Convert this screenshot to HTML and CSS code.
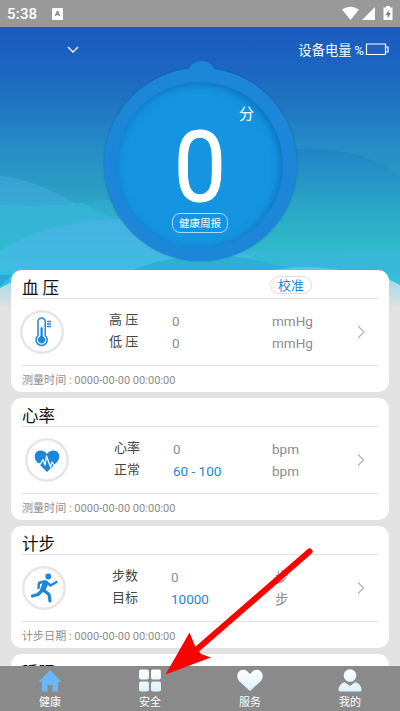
FILE: index.html
```html
<!DOCTYPE html>
<html lang="zh-CN">
<head>
<meta charset="utf-8">
<meta name="viewport" content="width=device-width, initial-scale=1">
<title>健康</title>
<link rel="stylesheet" href="styles.css">
</head>
<body>
<div class="screen">
  <header class="status">
    <span class="clock">5:38</span>
    <span class="ime">A</span>
    <svg class="signals" width="52" height="18" viewBox="0 0 52 18">
      <path fill="#fff" d="M0 4.500Q8.500-1 17 4.500L8.500 15Z M33 2v13H20Z"/>
      <path fill="#fff" d="M44 1h4v1.500h2.500v12.500H41.500v-12.500H44Z"/>
      <path fill="#777" d="M46.700 5l-3 5h2v3.500l3-5.500h-2Z"/>
    </svg>
  </header>

  <main class="content">
    <svg class="waves" width="400" height="285" viewBox="0 27 400 285" preserveAspectRatio="none">
      <defs>
        <linearGradient id="sky" x1="0" y1="27" x2="0" y2="312" gradientUnits="userSpaceOnUse">
          <stop offset="0" stop-color="#195abf"/>
          <stop offset=".16" stop-color="#1d67c1"/>
          <stop offset=".3" stop-color="#2179c2"/>
          <stop offset=".39" stop-color="#2588c6"/>
          <stop offset=".61" stop-color="#2ba3c4"/>
          <stop offset=".77" stop-color="#2eb9c9"/>
          <stop offset=".88" stop-color="#32c0da"/>
          <stop offset="1" stop-color="#32c0e0"/>
        </linearGradient>
        <linearGradient id="hill" x1="0" y1="150" x2="0" y2="245" gradientUnits="userSpaceOnUse">
          <stop offset="0" stop-color="#2084c6"/>
          <stop offset="1" stop-color="#2cb9ca" stop-opacity="0"/>
        </linearGradient>
        <linearGradient id="crest" x1="0" y1="220" x2="0" y2="275" gradientUnits="userSpaceOnUse">
          <stop offset="0" stop-color="#45b1e2"/>
          <stop offset="1" stop-color="#3fbee2"/>
        </linearGradient>
        <linearGradient id="fade" x1="0" y1="278" x2="0" y2="308" gradientUnits="userSpaceOnUse">
          <stop offset="0" stop-color="#9dd9e8"/>
          <stop offset="1" stop-color="#e2e2e2"/>
        </linearGradient>
      </defs>
      <path fill="url(#sky)" d="M0 27H400V312H0Z"/>
      <path fill="url(#hill)" d="M260 153Q350 138 400 176V250H260Z"/>
      <path fill="#35b0dc" fill-opacity=".42" d="M0 205Q60 208 130 197V240H0Z"/>
      <path fill="#45ace4" fill-opacity=".5" d="M0 176C45 180 75 207 115 221L130 240H0Z"/>
      <path fill="#32bcd4" fill-opacity=".55" d="M0 205Q45 207 82 203L115 219Q55 219 0 251Z"/>
      <path fill="url(#crest)" d="M0 251C50 219 120 211 180 228Q230 243 285 275H0Z"/>
      <path fill="#2eafd6" d="M130 271Q210 238 310 275H120Z"/>
      <path fill="#3ab5da" fill-opacity=".6" d="M235 249Q310 250 400 246V275H320Q280 258 235 253Z"/>
      <path fill="#56c8e0" d="M268 271Q308 263 345 271Z"/>
      <path fill="#34bfe2" d="M0 271H12V290H0Z"/>
      <path fill="#28abd2" d="M12 275L0 287V275Z"/>
      <path fill="url(#fade)" d="M0 288L12 282V312H0Z M388 279L400 285V312H388Z M12 290H388V312H12Z"/>
    </svg>

    <section class="hero">
      <div class="topbar">
        <svg class="chevron-down" width="12" height="8" viewBox="0 0 12 8"><path d="M1 1l5 5 5-5" fill="none" stroke="#fff" stroke-width="1.300"/></svg>
        <div class="device">设备电量&thinsp;%
          <svg width="25" height="13" viewBox="0 0 25 13"><path d="M1.500 1h19v10.500h-19Z M20.500 4h2.500v5h-2.500" fill="none" stroke="#fff" stroke-width="1.200"/></svg>
        </div>
      </div>
      <div class="gauge">
        <div class="dial">
          <span class="fen">分</span>
          <span class="score">0</span>
          <span class="report">健康周报</span>
        </div>
      </div>
    </section>

    <div class="cards">
      <article class="card card-bp">
        <h2>血 压<span class="calibrate">校准</span></h2>
        <div class="body">
          <div class="icon"><svg width="44" height="44" viewBox="0 0 44 44">
            <path fill="none" stroke="#1c86da" stroke-width="1.500" d="M18 25.500V11.500a3.600 3.600 0 0 1 7.200 0V25.500a5.600 5.600 0 1 1-7.200 0Z"/>
            <path d="M21 18a.6.6 0 0 1 1.200 0v8.500a3.300 3.300 0 1 1-1.200 0Z" fill="#1c86da" stroke="#1c86da"/>
            <path d="M27 11.500h4M27 14h4M27 16.500h4" stroke="#1c86da" stroke-width="1.300"/>
          </svg></div>
          <div class="rows">
            <span>高 压</span><b>0</b><i>mmHg</i>
            <span>低 压</span><b>0</b><i>mmHg</i>
          </div>
          <svg class="next" width="8" height="14" viewBox="0 0 8 14"><path d="M1 1l6 6-6 6"/></svg>
        </div>
        <footer>测量时间 : 0000-00-00 00:00:00</footer>
      </article>

      <article class="card card-hr">
        <h2>心率</h2>
        <div class="body">
          <div class="icon"><svg width="44" height="44" viewBox="0 0 44 44">
            <path fill="#1c86da" d="M22 34L11.500 23.500C8 19 10 12.500 15.500 12.500c3 0 5 1.500 6.500 3.500 1.500-2 3.500-3.500 6.500-3.500 5.500 0 7.500 6.500 4 11Z"/>
            <path fill="none" stroke="#fff" stroke-width="1.300" stroke-linejoin="round" d="M10 26h5.500l2.500-4.500 2 5.500 1.500-9 4 11 1.500-5 2 3h5"/>
          </svg></div>
          <div class="rows">
            <span>心率</span><b>0</b><i>bpm</i>
            <span>正常</span><b class="target">60 - 100</b><i>bpm</i>
          </div>
          <svg class="next" width="8" height="14" viewBox="0 0 8 14"><path d="M1 1.500l5.500 5.500-5.500 5.500"/></svg>
        </div>
        <footer>测量时间 : 0000-00-00 00:00:00</footer>
      </article>

      <article class="card card-step">
        <h2>计步</h2>
        <div class="body">
          <div class="icon"><svg width="44" height="44" viewBox="0 0 44 44">
            <circle cx="26.300" cy="10.500" r="2.900" fill="#1c86da"/>
            <g fill="none" stroke="#1c86da" stroke-linecap="round" stroke-linejoin="round">
              <path stroke-width="5.500" d="M23.500 17L21 23.500"/>
              <path stroke-width="2.500" d="M22 15.500l-5 1.500-.5 5M25 16.500l3.500 3 6-3.500"/>
              <path stroke-width="3.200" d="M20 24.500l-4 4-5.500 1.500M22 24.500l5 4 1 6.500"/>
            </g>
          </svg></div>
          <div class="rows">
            <span>步数</span><b>0</b><i>步</i>
            <span>目标</span><b class="target">10000</b><i>步</i>
          </div>
          <svg class="next" width="8" height="14" viewBox="0 0 8 14"><path d="M1 1.500l5.500 5.500-5.500 5.500"/></svg>
        </div>
        <footer>计步日期 : 0000-00-00 00:00:00</footer>
      </article>

      <article class="card card-sleep"><h2>睡眠</h2></article>
    </div>
  </main>

  <nav class="tabs">
    <a class="tab"><svg width="26" height="24" viewBox="0 0 26 24"><path fill="#6ab8fb" d="M13 1L24.500 13H21v9.500h-5.500V16h-5v6.500H5V13H1.500Z"/></svg>健康</a>
    <a class="tab"><svg width="26" height="24" viewBox="0 0 26 24"><g fill="url(#ice)"><rect x="2" y=".5" width="10" height="10" rx="2"/><rect x="14" y=".5" width="10" height="10" rx="2"/><rect x="2" y="12.500" width="10" height="10" rx="2"/><rect x="14" y="12.500" width="10" height="10" rx="2"/></g></svg>安全</a>
    <a class="tab"><svg width="28" height="24" viewBox="0 0 28 24"><path fill="url(#ice)" d="M14 22L3 12C-2 5 5-2 11 2l3 3 3-3c6-4 13 3 8 10Z"/></svg>服务</a>
    <a class="tab"><svg width="26" height="24" viewBox="0 0 26 24"><g fill="url(#ice)"><circle cx="13" cy="6.500" r="6.300"/><path d="M7.500 13L13 17l5.500-4c4 1.500 6 5 6 7.500 0 1.500-.5 2-1.500 2H3c-1 0-1.500-.5-1.500-2 0-2.500 2-6 6-7.500Z"/></g></svg>我的</a>
    <svg width="0" height="0" class="defs"><linearGradient id="ice" x1="0" y1="0" x2="0" y2="24" gradientUnits="userSpaceOnUse"><stop offset="0" stop-color="#fff"/><stop offset="1" stop-color="#d9eff8"/></linearGradient></svg>
  </nav>

  <svg class="arrow" width="160" height="136" viewBox="160 544 160 136">
    <path d="M309.500 551.500L195 651" stroke="#fe0000" stroke-width="6" stroke-linecap="round"/>
    <path fill="#fe0000" d="M165.500 674.500L189.500 632.500 195 646 201 654 211 657.500Z"/>
  </svg>
</div>
</body>
</html>
```
FILE: styles.css
```css
* { box-sizing: border-box; }
body {
  margin: 0;
  font-family: Roboto, "Noto Sans CJK SC", sans-serif;
  background: #e2e2e2;
}
.screen {
  position: relative;
  display: flex;
  flex-direction: column;
  width: 400px;
  height: 711px;
  overflow: hidden;
}
.status {
  display: flex;
  align-items: center;
  flex: none;
  height: 27px;
  padding: 0 7px;
  background: #999;
  color: #fff;
}
.clock { width: 45px; font-size: 15px; font-weight: 500; letter-spacing: .2px; }
.ime {
  width: 11px;
  height: 12px;
  border-radius: 1px;
  background: #fff;
  color: #777;
  font-size: 8px;
  font-weight: 700;
  line-height: 12px;
  text-align: center;
}
.signals { margin-left: auto; margin-right: -1px; }

.content { position: relative; flex: 1; min-height: 0; overflow: hidden; }
.waves { position: absolute; top: 0; left: 0; }
.hero { position: relative; height: 243px; }
.topbar {
  display: flex;
  align-items: center;
  justify-content: space-between;
  height: 46px;
  padding: 0 10px 0 67px;
}
.device {
  display: flex;
  align-items: center;
  gap: 1px;
  margin-top: -1px;
  color: #fff;
  font-size: 13.300px;
}
.gauge {
  position: relative;
  display: flex;
  align-items: center;
  justify-content: center;
  width: 193px;
  height: 193px;
  margin: -5px auto 0;
  border-radius: 50%;
  background: #1c86d9;
  box-shadow: 0 0 2px rgba(10, 70, 130, .5);
}
.gauge::before {
  content: "";
  position: absolute;
  top: -7px;
  left: 84px;
  width: 27px;
  height: 25px;
  border-radius: 50%;
  background: #1c86d9;
}
.dial {
  position: relative;
  display: flex;
  flex-direction: column;
  align-items: center;
  width: 166px;
  height: 166px;
  border-radius: 50%;
  background: #1594e1;
  color: #fff;
  box-shadow: inset -2px 2px 8px rgba(8, 75, 145, .5);
}
.fen { margin: 22px 0 0 93px; font-size: 15px; line-height: 21px; }
.score {
  height: 88px;
  font-size: 99px;
  line-height: 84px;
  transform: scaleX(.94);
  -webkit-text-stroke: 1px #fff;
}
.report {
  width: 56px;
  height: 20px;
  border: 1px solid rgba(255, 255, 255, .65);
  border-radius: 8px;
  font-size: 10.500px;
  line-height: 19px;
  text-align: center;
  white-space: nowrap;
}

.cards {
  position: relative;
  display: flex;
  flex-direction: column;
  gap: 6px;
  padding: 0 11px;
}
.card {
  height: 122px;
  flex: none;
  padding: 0 11px;
  border-radius: 11px;
  background: #fff;
}
.card h2 {
  display: flex;
  align-items: center;
  height: 29px;
  margin: 0;
  padding-top: 6px;
  border-bottom: 1px solid #e4e4e4;
  color: #111;
  font-size: 16.500px;
  font-weight: 400;
  white-space: pre;
}
.card-bp h2 { position: relative; }
.card-sleep h2 { padding-top: 8px; }
.calibrate {
  position: absolute;
  top: 6px;
  left: 248px;
  width: 42px;
  height: 18px;
  border: 1px solid #dedede;
  border-radius: 9px;
  color: #1c86da;
  font-size: 13px;
  line-height: 17px;
  text-align: center;
}
.body {
  display: flex;
  align-items: center;
  height: 67px;
  border-bottom: 1px solid #e4e4e4;
}
.icon {
  width: 44px;
  height: 44px;
  flex: none;
  margin: -1px 0 0 var(--icon-x);
  border-radius: 50%;
  box-shadow: inset 0 0 0 2.500px #e6e6e6;
}
.icon svg { display: block; }
.rows {
  display: grid;
  grid-template-columns: var(--label-w) var(--value-w) 1fr;
  grid-auto-rows: 22px;
  align-items: center;
  flex: 1;
  margin: -3px 0 0 var(--label-gap);
  color: #8c8c8c;
  font-size: 13.500px;
  line-height: 22px;
  white-space: nowrap;
}
.rows span { color: #444; font-size: 13px; }
.rows b, .rows i { padding-top: 2px; font-weight: 400; font-style: normal; }
.rows .target { color: #1c86da; }
.card-bp { --icon-x: -2px; --label-gap: 45px; --label-w: 63px; --value-w: 100px; }
.card-hr { --icon-x: 3px; --label-gap: 45px; --label-w: 59px; --value-w: 99px; }
.card-step { --icon-x: 0px; --label-gap: 46px; --label-w: 59px; --value-w: 104px; }
.next { flex: none; margin-right: 13px; fill: none; stroke: #b0b0b0; stroke-width: 1.200; }
.card footer { color: #8e8e8e; font-size: 11.050px; line-height: 26px; height: 26px; padding-top: 2px; }

.tabs {
  position: relative;
  display: grid;
  grid-template-columns: repeat(4, 1fr);
  flex: none;
  height: 45px;
  background: #8a8a8a;
}
.tab {
  display: flex;
  flex-direction: column;
  align-items: center;
  padding-top: 3px;
  color: #fff;
  font-size: 11px;
  line-height: 20px;
}
.defs { position: absolute; }
.arrow { position: absolute; left: 160px; top: 544px; }
```
